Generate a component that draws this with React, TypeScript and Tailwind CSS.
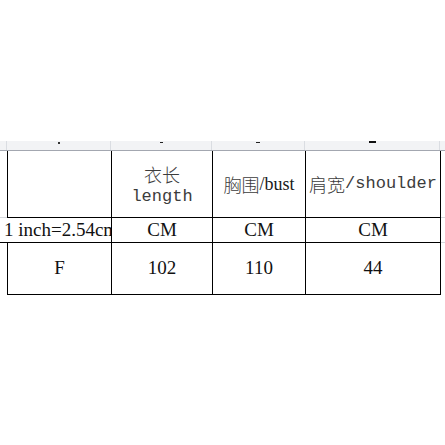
const serif = { fontFamily: '"Liberation Serif", "Times New Roman", serif' };
const cjk = { fontFamily: '"Noto Sans CJK SC", sans-serif' };
const mono = { fontFamily: '"Liberation Mono", monospace' };

function App() {
  return (
    <div className="w-[445px] h-[445px] bg-white overflow-hidden" style={serif}>
      <div className="h-[141px]" />
      {/* clipped row above the table */}
      <div className="flex h-[10px] bg-[#f2f3f5] border-b border-[#a3a7b0]">
        <div className="w-[7px] border-r border-[#dadde2]" />
        <div className="w-[104px] border-r border-[#dadde2] flex justify-center">
          <div className="w-[2px] h-[2px] mt-[1px] bg-[#333]" />
        </div>
        <div className="w-[101px] border-r border-[#dadde2] flex justify-center">
          <div className="w-[3px] h-[1px] mt-[1px] bg-[#222]" />
        </div>
        <div className="w-[93px] border-r border-[#dadde2] flex justify-center">
          <div className="w-[4px] h-[1px] mt-[1px] bg-[#222]" />
        </div>
        <div className="w-[135px] border-r border-[#dadde2] flex justify-center">
          <div className="w-[7px] h-[2px] mt-0 bg-[#111]" />
        </div>
        <div className="flex-1" />
      </div>

      {/* header row */}
      <div className="flex h-[67px]">
        <div className="w-[7px] border-b border-[#d5d8dd]" />
        <div className="w-[105px] border-l border-r border-b border-black" />
        <div className="w-[101px] border-r border-b border-black flex flex-col items-center justify-center text-[#3c3c3c] pt-[1px]">
          <span className="text-[18px] leading-[25px] font-light" style={cjk}>
            衣长
          </span>
          <span className="text-[17px] leading-[20px]" style={mono}>
            length
          </span>
        </div>
        <div className="w-[93px] border-r border-b border-black flex items-center justify-center whitespace-nowrap">
          <span className="text-[18px] font-light text-[#3c3c3c]" style={cjk}>
            胸围
          </span>
          <span className="text-[18px] text-[#1a1a1a]">/bust</span>
        </div>
        <div className="w-[135px] border-r border-b border-black flex items-center justify-center whitespace-nowrap text-[#3c3c3c]">
          <span className="text-[18px] font-light" style={cjk}>
            肩宽
          </span>
          <span className="text-[17px]" style={mono}>
            /shoulder
          </span>
        </div>
        <div className="flex-1 border-b border-[#d5d8dd]" />
      </div>

      {/* unit row */}
      <div className="flex h-[25px] text-[19px] text-[#111]">
        <div className="w-[112px] border-r border-b border-black flex items-center pl-[4px] overflow-hidden whitespace-nowrap">
          <span className="shrink-0">1 inch=2.54cm</span>
        </div>
        <div className="w-[101px] border-r border-b border-black flex items-center justify-center">CM</div>
        <div className="w-[93px] border-r border-b border-black flex items-center justify-center">CM</div>
        <div className="w-[135px] border-r border-b border-black flex items-center justify-center">CM</div>
        <div className="flex-1 border-b border-[#d5d8dd]" />
      </div>

      {/* size row */}
      <div className="flex h-[52px] text-[19px] text-[#111]">
        <div className="w-[7px]" />
        <div className="w-[105px] border-l border-r border-b border-black flex items-center justify-center">F</div>
        <div className="w-[101px] border-r border-b border-black flex items-center justify-center">102</div>
        <div className="w-[93px] border-r border-b border-black flex items-center justify-center">110</div>
        <div className="w-[135px] border-r border-b border-black flex items-center justify-center">44</div>
        <div className="flex-1" />
      </div>
    </div>
  );
}

export default App;
